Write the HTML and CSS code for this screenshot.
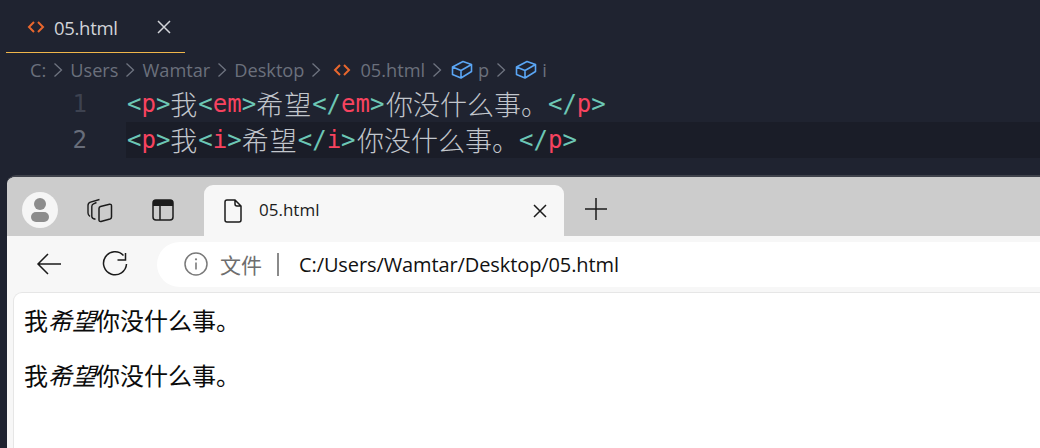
FILE: index.html
```html
<!DOCTYPE html>
<html lang="zh">
<head>
<meta charset="utf-8">
<title>05.html</title>
<link rel="stylesheet" href="styles.css">
</head>
<body>
<section class="editor">
  <div class="tabs">
    <div class="tab">
      <svg class="code-ico" width="18" height="14" viewBox="0 0 18 14"><path d="M7 2 2 7l5 5M11 2l5 5-5 5" fill="none" stroke="#e8672e" stroke-width="2"/></svg>
      <span class="tab-name">05.html</span>
      <svg class="tab-x" width="16" height="16" viewBox="0 0 16 16"><path d="M2 2l12 12M14 2 2 14" fill="none" stroke="#d2d4d9" stroke-width="1.500"/></svg>
    </div>
  </div>
  <nav class="crumbs">
    <span>C:</span><svg class="chev" width="10" height="16" viewBox="0 0 10 16"><path d="M1.500 1.500 8.500 8l-7 6.500" fill="none" stroke="#6f7480" stroke-width="1.300"/></svg>
    <span>Users</span><svg class="chev" width="10" height="16" viewBox="0 0 10 16"><path d="M1.500 1.500 8.500 8l-7 6.500" fill="none" stroke="#6f7480" stroke-width="1.300"/></svg>
    <span>Wamtar</span><svg class="chev" width="10" height="16" viewBox="0 0 10 16"><path d="M1.500 1.500 8.500 8l-7 6.500" fill="none" stroke="#6f7480" stroke-width="1.300"/></svg>
    <span>Desktop</span><svg class="chev" width="10" height="16" viewBox="0 0 10 16"><path d="M1.500 1.500 8.500 8l-7 6.500" fill="none" stroke="#6f7480" stroke-width="1.300"/></svg>
    <svg class="code-ico crumb-code" width="18" height="14" viewBox="0 0 18 14"><path d="M7 2 2 7l5 5M11 2l5 5-5 5" fill="none" stroke="#e8672e" stroke-width="2"/></svg>
    <span>05.html</span><svg class="chev" width="10" height="16" viewBox="0 0 10 16"><path d="M1.500 1.500 8.500 8l-7 6.500" fill="none" stroke="#6f7480" stroke-width="1.300"/></svg>
    <svg class="cube" width="22" height="20" viewBox="0 0 22 20"><path d="M1.500 7 12 1.500 20.500 4.500V11.500L10 18 1.500 14.500zM1.500 7 10 10.500 20.500 4.500M10 10.500V18" fill="none" stroke="#5aa6f5" stroke-width="1.600" stroke-linejoin="round"/></svg>
    <span>p</span><svg class="chev" width="10" height="16" viewBox="0 0 10 16"><path d="M1.500 1.500 8.500 8l-7 6.500" fill="none" stroke="#6f7480" stroke-width="1.300"/></svg>
    <svg class="cube" width="22" height="20" viewBox="0 0 22 20"><path d="M1.500 7 12 1.500 20.500 4.500V11.500L10 18 1.500 14.500zM1.500 7 10 10.500 20.500 4.500M10 10.500V18" fill="none" stroke="#5aa6f5" stroke-width="1.600" stroke-linejoin="round"/></svg>
    <span>i</span>
  </nav>
  <div class="code">
    <div class="line">
      <span class="num">1</span>
      <code class="src"><b>&lt;</b><i>p</i><b>&gt;</b><u>我</u><b>&lt;</b><i>em</i><b>&gt;</b><u>希望</u><b>&lt;/</b><i>em</i><b>&gt;</b><u class="tail">你没什么事。</u><b>&lt;/</b><i>p</i><b>&gt;</b></code>
    </div>
    <div class="line current">
      <span class="num">2</span>
      <code class="src"><b>&lt;</b><i>p</i><b>&gt;</b><u>我</u><b>&lt;</b><i>i</i><b>&gt;</b><u>希望</u><b>&lt;/</b><i>i</i><b>&gt;</b><u class="tail">你没什么事。</u><b>&lt;/</b><i>p</i><b>&gt;</b></code>
    </div>
  </div>
</section>
<section class="browser">
  <div class="strip">
    <div class="avatar"><svg width="24" height="26" viewBox="0 0 24 26"><circle cx="12" cy="7" r="6" fill="#8c8c8c"/><rect x="3" y="15" width="18" height="10" rx="5" fill="#8c8c8c"/></svg></div>
    <svg class="strip-ico pages" width="26" height="26" viewBox="0 0 26 26"><path d="M12.500 2.500 3.500 5.200Q1 6 1 8.500V16Q1 18 3 19.500M9.500 5.500 6.500 6.800Q4.800 7.500 4.800 9.500V19.500Q4.800 21.500 8.500 22.300" fill="none" stroke="#1b1b1b" stroke-width="1.400"/><path d="M13.500 9.500 22.500 7.200Q24.500 7 24.500 9V20Q24.500 21.500 23 22L14 24.500Q12 24.700 12 23V11.500Q12 10 13.500 9.500z" fill="none" stroke="#1b1b1b" stroke-width="1.500"/></svg>
    <svg class="strip-ico win" width="22" height="22" viewBox="0 0 22 22"><rect x="1" y="1" width="20" height="20" rx="3" fill="none" stroke="#1b1b1b" stroke-width="1.500"/><path d="M1 3.500Q1 1 3.500 1h15Q21 1 21 3.500V7H1z" fill="#1b1b1b"/><path d="M8 7v14" stroke="#1b1b1b" stroke-width="1.500"/></svg>
    <div class="b-tab">
      <svg width="18" height="24" viewBox="0 0 18 24"><path d="M3 1h8l6 6v14q0 2-2 2H3q-2 0-2-2V3q0-2 2-2zM11 1v4q0 2 2 2h4" fill="none" stroke="#1b1b1b" stroke-width="1.500"/></svg>
      <span class="b-title">05.html</span>
      <svg class="b-close" width="14" height="14" viewBox="0 0 14 14"><path d="M1 1l12 12M13 1 1 13" fill="none" stroke="#1b1b1b" stroke-width="1.500"/></svg>
    </div>
    <svg class="plus" width="22" height="22" viewBox="0 0 22 22"><path d="M11 0v22M0 11h22" fill="none" stroke="#1b1b1b" stroke-width="1.500"/></svg>
  </div>
  <div class="toolbar">
    <svg class="nav-ico" width="26" height="24" viewBox="0 0 26 24"><path d="M25 12H2M12 2 2 12l10 10" fill="none" stroke="#1b1b1b" stroke-width="1.500"/></svg>
    <svg class="nav-ico reload" width="26" height="26" viewBox="0 0 26 26"><path d="M21.500 4.500A11.500 11.500 0 1 0 24.500 13M23.500 2v7h-8" fill="none" stroke="#1b1b1b" stroke-width="1.500"/></svg>
    <div class="address">
      <svg width="24" height="24" viewBox="0 0 24 24"><circle cx="12" cy="12" r="11" fill="none" stroke="#7a7a7a" stroke-width="1.500"/><path d="M12 10.500v7" stroke="#7a7a7a" stroke-width="1.600"/><circle cx="12" cy="7.300" r="1.100" fill="#7a7a7a"/></svg>
      <span class="file-label">文件</span>
      <span class="divider"></span>
      <span class="url">C:/Users/Wamtar/Desktop/05.html</span>
    </div>
  </div>
  <main class="page">
    <p>我<em>希望</em>你没什么事。</p>
    <p>我<i>希望</i>你没什么事。</p>
  </main>
</section>
</body>
</html>
```
FILE: styles.css
```css
* { box-sizing: border-box; }
html, body { height: 100%; }
body {
  margin: 0;
  overflow: hidden;
  background: #1f2330;
  font-family: "Open Sans", "Noto Sans CJK SC", sans-serif;
  display: flex;
  flex-direction: column;
}
svg { display: block; flex: none; }

.editor { height: 175px; flex: none; padding-left: 6px; }
.tabs { height: 53px; display: flex; }
.tab {
  width: 179px;
  height: 53px;
  display: flex;
  align-items: center;
  padding: 2px 12px 0 21px;
  border-bottom: 1px solid #f0b64a;
  color: #d2d4d9;
  font-size: 18.500px;
}
.tab-name { margin-left: 9px; letter-spacing: -.3px; }
.tab-x { margin-left: auto; margin-right: 1px; }

.crumbs {
  height: 33px;
  display: flex;
  align-items: center;
  padding-left: 24px;
  color: #6b707c;
  font-size: 18.200px;
}
.chev { margin: 0 7px; }
.crumb-code { margin: 0 9px 0 5px; }
.cube { margin: 0 5px 0 2px; }

.line { height: 36px; display: flex; align-items: center; }
.num {
  width: 81px;
  text-align: right;
  font: 24px/36px "DejaVu Sans Mono", monospace;
  color: #3d4250;
}
.current .num { color: #686d7a; }
.src {
  margin-left: 39px;
  padding-left: 1px;
  height: 36px;
  flex: 1;
  display: flex;
  align-items: center;
  font: 24px/36px "DejaVu Sans Mono", monospace;
  white-space: pre;
}
.current .src { background: #1a1d28; }
.src b { font-weight: 400; color: #6cc7b5; }
.src i { font-style: normal; color: #f7435f; }
.src u {
  text-decoration: none;
  color: #c2c6cc;
  font-family: "Noto Sans CJK SC", sans-serif;
  font-size: 27px;
  font-weight: 300;
  letter-spacing: 1px;
}
.src .tail { letter-spacing: 0; margin-left: 1.500px; }

.browser {
  flex: 1;
  margin-left: 7px;
  background: #f7f7f7;
  border-top: 2px solid #3f424b;
  border-top-left-radius: 9px;
  overflow: hidden;
  display: flex;
  flex-direction: column;
}
.strip {
  height: 59px;
  flex: none;
  background: #cccccc;
  display: flex;
  align-items: flex-end;
  padding-left: 15px;
}
.avatar {
  width: 36px;
  height: 36px;
  margin-bottom: 8px;
  border-radius: 50%;
  background: #f5f5f5;
  display: flex;
  align-items: center;
  justify-content: center;
}
.pages { margin: 0 0 13px 29px; }
.win { margin: 0 0 15px 39px; }
.b-tab {
  width: 360px;
  height: 51px;
  margin-left: 30px;
  padding: 0 17px 0 20px;
  background: #f7f7f7;
  border-radius: 9px 9px 0 0;
  display: flex;
  align-items: center;
}
.b-title { margin: -2px 0 0 17px; font-size: 17px; color: #1b1b1b; }
.b-close { margin-left: auto; }
.plus { margin: 0 0 16px 21px; }

.toolbar {
  height: 56px;
  flex: none;
  display: flex;
  align-items: center;
  padding: 0 0 0 29px;
}
.nav-ico.reload { margin-left: 40px; }
.address {
  margin-left: 29px;
  flex: 1;
  height: 45px;
  background: #fff;
  border-radius: 23px 0 0 23px;
  display: flex;
  align-items: center;
  padding-left: 27px;
}
.file-label { margin-left: 12px; font-size: 21px; color: #6e6e6e; }
.divider { width: 2px; height: 23px; background: #8a8a8a; margin: 0 20px 0 15px; }
.url { font-size: 20px; color: #111; letter-spacing: -.1px; }

.page {
  flex: 1;
  margin-left: 6px;
  padding: 11px 10px;
  background: #fff;
  border: 1px solid #e6e6e6;
  border-right: 0;
  border-bottom: 0;
  border-top-left-radius: 9px;
  color: #0b0b0b;
  font-family: "Noto Sans CJK SC", sans-serif;
  font-size: 24px;
  line-height: 31px;
}
.page p { margin: 0 0 24px; }
```
